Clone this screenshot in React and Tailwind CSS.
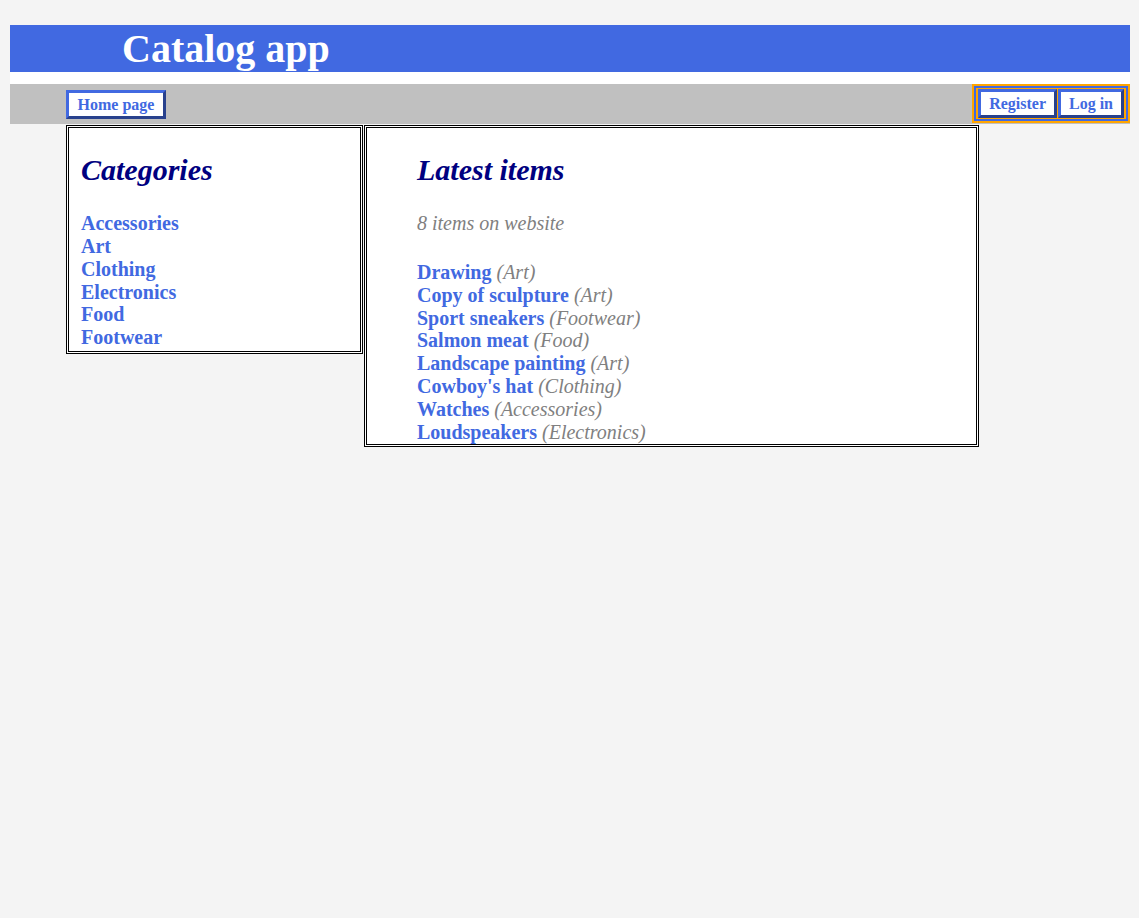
import React from "react";

const categories = ["Accessories", "Art", "Clothing", "Electronics", "Food", "Footwear"];

const items = [
  { name: "Drawing", category: "Art" },
  { name: "Copy of sculpture", category: "Art" },
  { name: "Sport sneakers", category: "Footwear" },
  { name: "Salmon meat", category: "Food" },
  { name: "Landscape painting", category: "Art" },
  { name: "Cowboy's hat", category: "Clothing" },
  { name: "Watches", category: "Accessories" },
  { name: "Loudspeakers", category: "Electronics" },
];

function NavButton({ children, wide }) {
  return (
    <a
      href="#"
      className={`block bg-white border-[3px] [border-style:outset] border-[#4169e1] py-[2px] leading-[19px] text-[16px] font-bold text-[#4169e1] ${wide ? "px-[8.5px]" : "px-2"}`}
    >
      {children}
    </a>
  );
}

export default function App() {
  return (
    <div className="min-h-screen bg-[#f4f4f4] pt-[10px] pl-[10px] pr-[9px] font-['Liberation_Serif','Times_New_Roman',serif]">
      {/* Header */}
      <div className="mt-[15px] h-[47px] bg-[#4169e1] pl-[112px]">
        <h1 className="text-[40px] leading-[47px] font-bold text-white">Catalog app</h1>
      </div>
      <div className="h-[12px] bg-white" />

      {/* Nav */}
      <div className="flex h-[40px] items-start justify-between bg-[#c0c0c0] pl-[56px]">
        <div className="mt-[6px]">
          <NavButton wide>Home page</NavButton>
        </div>
        <div className="border-2 border-[#ffa500]">
          <div className="flex gap-px border-2 border-[#4169e1] bg-[#ffa500] px-[2px] py-px">
            <NavButton>Register</NavButton>
            <NavButton>Log in</NavButton>
          </div>
        </div>
      </div>

      {/* Content */}
      <div className="mt-px flex items-start pl-[56px]">
        <div className="w-[297px] border-[3px] border-double border-black bg-white pl-[12px] pb-[2px]">
          <h2 className="mt-[25px] mb-[26px] text-[30px] leading-[33px] font-bold italic text-[#000080]">Categories</h2>
          <div className="flex flex-col">
            {categories.map((c) => (
              <a key={c} href="#" className="text-[20px] leading-[22.86px] font-bold text-[#4169e1]">
                {c}
              </a>
            ))}
          </div>
        </div>

        <div className="ml-px w-[615px] border-[3px] border-double border-black bg-white pl-[50px]">
          <h2 className="mt-[25px] mb-[26px] text-[30px] leading-[33px] font-bold italic text-[#000080]">Latest items</h2>
          <p className="mb-[26px] text-[20px] leading-[22.86px] italic text-[#808080]">8 items on website</p>
          <div className="flex flex-col">
            {items.map((it) => (
              <div key={it.name} className="text-[20px] leading-[22.86px]">
                <a href="#" className="font-bold text-[#4169e1]">
                  {it.name}
                </a>{" "}
                <span className="italic text-[#808080]">({it.category})</span>
              </div>
            ))}
          </div>
        </div>
      </div>
    </div>
  );
}
